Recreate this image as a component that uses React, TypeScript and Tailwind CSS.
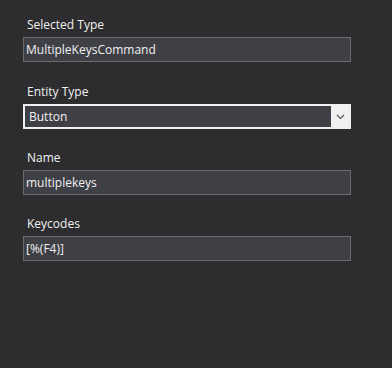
export default function App() {
  const fields = [
    { label: 'Selected Type', value: 'MultipleKeysCommand' },
  ];

  return (
    <div
      className="min-h-screen w-full bg-[#2d2d30] text-[#f1f1f1] text-[12px] leading-[16px]"
      style={{ fontFamily: '"Open Sans", "Noto Sans", sans-serif' }}
    >
      <div className="w-[328px] ml-[23px] pt-[17px] flex flex-col">
        {fields.map((f) => (
          <div key={f.label} className="flex flex-col">
            <label className="pl-[4px] mb-[4px]">{f.label}</label>
            <div className="h-[25px] border border-[#6b6b6b] bg-[#3f3f46] pl-[2px] flex items-center">
              {f.value}
            </div>
          </div>
        ))}

        <div className="flex flex-col mt-[22px]">
          <label className="pl-[4px] mb-[4px]">Entity Type</label>
          <div className="h-[25px] border border-[#f0f0f0] bg-[#f0f0f0] p-px flex">
            <div className="flex-1 bg-[#3f3f46] pl-[4px] flex items-center">Button</div>
            <div className="w-[18px] flex items-center justify-center">
              <svg width="9" height="6" viewBox="0 0 9 6">
                <path d="M1 1 L4.5 4.5 L8 1" fill="none" stroke="#555" strokeWidth="1.2" />
              </svg>
            </div>
          </div>
        </div>

        <div className="flex flex-col mt-[21px]">
          <label className="pl-[4px] mb-[4px]">Name</label>
          <div className="h-[25px] border border-[#6b6b6b] bg-[#3f3f46] pl-[2px] flex items-center">
            multiplekeys
          </div>
        </div>

        <div className="flex flex-col mt-[21px]">
          <label className="pl-[4px] mb-[4px]">Keycodes</label>
          <div className="h-[25px] border border-[#6b6b6b] bg-[#3f3f46] pl-[2px] flex items-center">
            [%(F4)]
          </div>
        </div>
      </div>
    </div>
  );
}
